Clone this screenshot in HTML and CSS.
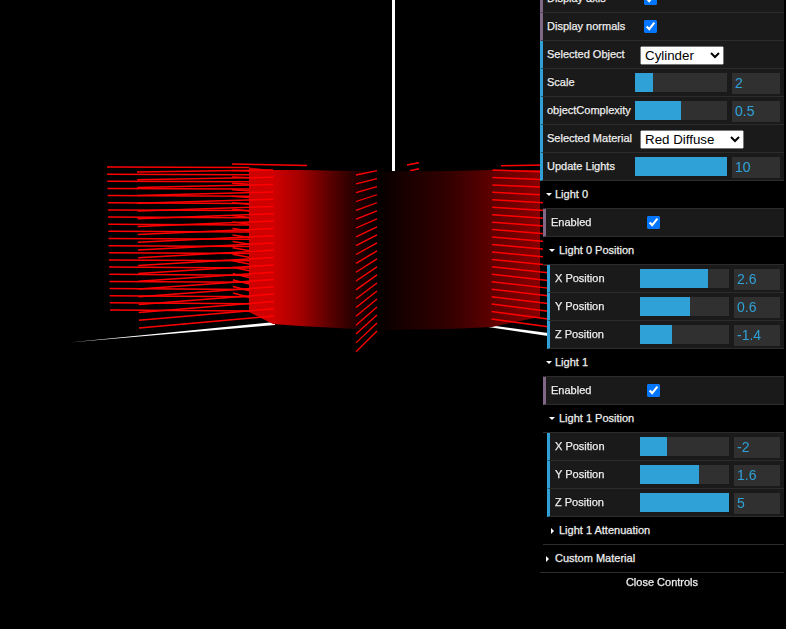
FILE: index.html
```html
<!DOCTYPE html>
<html lang="en">
<head>
<meta charset="utf-8">
<title>Scene controls</title>
<link rel="stylesheet" href="styles.css">
</head>
<body>
<canvas id="scene" class="scene" width="786" height="629"></canvas>
<div class="panel">
  <div class="row check"><span class="label">Display axis</span><input class="box" type="checkbox" checked></div>
  <div class="row check"><span class="label">Display normals</span><input class="box" type="checkbox" checked></div>
  <div class="row"><span class="label">Selected Object</span><select class="pick pick-object"><option>Cylinder</option></select></div>
  <div class="row"><span class="label">Scale</span><div class="slider"><div class="fill" style="width:20%"></div></div><input class="num" type="text" value="2"></div>
  <div class="row"><span class="label">objectComplexity</span><div class="slider"><div class="fill" style="width:50%"></div></div><input class="num" type="text" value="0.5"></div>
  <div class="row"><span class="label">Selected Material</span><select class="pick pick-material"><option>Red Diffuse</option></select></div>
  <div class="row"><span class="label">Update Lights</span><div class="slider"><div class="fill" style="width:100%"></div></div><input class="num" type="text" value="10"></div>

  <div class="folder">
    <div class="title open">Light 0</div>
    <div class="row check"><span class="label">Enabled</span><input class="box" type="checkbox" checked></div>
    <div class="title open sub">Light 0 Position</div>
    <div class="group">
      <div class="row"><span class="label">X Position</span><div class="slider"><div class="fill" style="width:76.4%"></div></div><input class="num" type="text" value="2.6"></div>
      <div class="row"><span class="label">Y Position</span><div class="slider"><div class="fill" style="width:56%"></div></div><input class="num" type="text" value="0.6"></div>
      <div class="row"><span class="label">Z Position</span><div class="slider"><div class="fill" style="width:36%"></div></div><input class="num" type="text" value="-1.4"></div>
    </div>
    <div class="title open">Light 1</div>
    <div class="row check"><span class="label">Enabled</span><input class="box" type="checkbox" checked></div>
    <div class="title open sub">Light 1 Position</div>
    <div class="group">
      <div class="row"><span class="label">X Position</span><div class="slider"><div class="fill" style="width:30%"></div></div><input class="num" type="text" value="-2"></div>
      <div class="row"><span class="label">Y Position</span><div class="slider"><div class="fill" style="width:66.3%"></div></div><input class="num" type="text" value="1.6"></div>
      <div class="row"><span class="label">Z Position</span><div class="slider"><div class="fill" style="width:100%"></div></div><input class="num" type="text" value="5"></div>
    </div>
    <div class="title closed sub">Light 1 Attenuation</div>
  </div>
  <div class="title closed top">Custom Material</div>
  <div class="close">Close Controls</div>
</div>
<script src="script.js"></script>
</body>
</html>
```
FILE: styles.css
```css
html, body {
  margin: 0;
  height: 100%;
  overflow: hidden;
  background: #000;
}

.scene {
  display: block;
}

.panel {
  position: absolute;
  top: -15px;
  right: 2px;
  width: 244px;
  font: 11px/27px "Liberation Sans", Arial, sans-serif;
  color: #eee;
  text-shadow: 0 -1px 0 #111;
  -webkit-text-stroke: 0.25px #eee;
}

.row {
  display: flex;
  align-items: flex-start;
  height: 27px;
  border-bottom: 1px solid #2c2c2c;
  border-left: 3px solid #2fa1d6;
  background: #1a1a1a;
}

.row.check {
  border-left-color: #806787;
}

.label {
  flex: none;
  box-sizing: border-box;
  width: 92px;
  padding-left: 4px;
  white-space: nowrap;
}

.box {
  width: 13px;
  height: 13px;
  margin: 7px 0 0 9px;
}

.pick {
  box-sizing: border-box;
  height: 19px;
  margin: 5px 0 0 5px;
  font: 13.33px "Liberation Sans", Arial, sans-serif;
  -webkit-text-stroke: 0;
}

.pick-object {
  width: 84px;
}

.pick-material {
  width: 104px;
}

.slider {
  flex: none;
  width: 92px;
  height: 19px;
  margin-top: 4px;
  background: #303030;
}

.fill {
  height: 100%;
  background: #2fa1d6;
}

.num {
  flex: none;
  box-sizing: border-box;
  width: 48px;
  height: 21px;
  margin: 4px 0 0 5px;
  padding: 0 3px 2px;
  border: 0;
  outline: 0;
  background: #303030;
  color: #2fa1d6;
  font: 14px "Liberation Sans", Arial, sans-serif;
  -webkit-text-stroke: 0;
}

.folder {
  margin-left: 3px;
}

.folder > .row .label {
  padding-left: 5px;
}

.title {
  position: relative;
  height: 27px;
  padding-left: 12px;
  border-bottom: 1px solid #2c2c2c;
  background: #000;
  white-space: nowrap;
}

.title::before {
  content: "";
  position: absolute;
  top: 12px;
  left: 3px;
  border-style: solid;
  border-color: transparent;
}

.title.open::before {
  border-width: 3px 3px 0;
  border-top-color: #fff;
}

.title.closed::before {
  top: 11px;
  border-width: 3px 0 3px 3px;
  border-left-color: #fff;
}

.title.sub {
  padding-left: 16px;
}

.title.sub.open::before {
  left: 6px;
}

.title.sub.closed::before {
  left: 8px;
}

.title.top {
  padding-left: 15px;
}

.title.top::before {
  left: 6px;
}

.group {
  margin-left: 4px;
}

.group .label {
  width: 90px;
  padding-left: 5px;
}

.group .slider {
  width: 89px;
}

.group .num {
  width: 46px;
}

.close {
  height: 20px;
  line-height: 19px;
  text-align: center;
  background: #000;
}
```
FILE: script.js
```js
(function () {
  var ctx = document.getElementById('scene').getContext('2d');

  function line(x1, y1, x2, y2, width, color) {
    ctx.beginPath();
    ctx.moveTo(x1, y1);
    ctx.lineTo(x2, y2);
    ctx.lineWidth = width;
    ctx.strokeStyle = color;
    ctx.stroke();
  }

  // A ring of normals: n lines interpolated between a top and a bottom line.
  function ring(top, bottom, width) {
    var n = 20;
    for (var i = 0; i <= n; i++) {
      var t = i / n;
      line(
        top[0] + (bottom[0] - top[0]) * t,
        top[1] + (bottom[1] - top[1]) * t,
        top[2] + (bottom[2] - top[2]) * t,
        top[3] + (bottom[3] - top[3]) * t,
        width,
        '#f00'
      );
    }
  }

  // Axes
  ctx.fillStyle = '#fff';
  ctx.fillRect(392, 0, 3, 171);
  ctx.beginPath();
  ctx.moveTo(69, 342.5);
  ctx.lineTo(275, 322);
  ctx.lineTo(275, 325);
  ctx.closePath();
  ctx.fill();
  ctx.beginPath();
  ctx.moveTo(488, 325);
  ctx.lineTo(548, 333);
  ctx.lineTo(548, 336);
  ctx.lineTo(488, 327);
  ctx.closePath();
  ctx.fill();

  // Normals behind the cylinder
  ring([232, 164, 307, 165.5], [233, 293, 300, 311], 1.5);
  line(407, 165, 419, 162.7, 1.5, '#f00');
  line(410, 170.7, 419, 168.7, 1.5, '#f00');
  line(501, 165.7, 548, 165, 1.5, '#f00');

  // Cylinder body
  var body = ctx.createLinearGradient(249, 0, 540, 0);
  var stops = [
    [249, 205], [273, 208], [300, 165], [330, 90], [356, 35], [378, 4],
    [400, 22], [450, 52], [490, 92], [540, 135]
  ];
  stops.forEach(function (s) {
    body.addColorStop((s[0] - 249) / 291, 'rgb(' + s[1] + ',0,0)');
  });
  ctx.fillStyle = body;
  ctx.beginPath();
  [
    [249, 167.5], [273, 170], [300, 170], [356, 171], [378, 171.5], [450, 171],
    [492, 170], [540, 170], [540, 317], [515, 322], [492, 327], [450, 329],
    [378, 330], [356, 329], [300, 326], [273, 324], [249, 312]
  ].forEach(function (p, i) {
    if (i) ctx.lineTo(p[0], p[1]); else ctx.moveTo(p[0], p[1]);
  });
  ctx.closePath();
  ctx.fill();

  // Normals in front of the cylinder
  ring([107, 167, 249, 167.5], [110, 310, 250, 311], 1.5);
  ring([137, 172, 273, 170], [139, 328, 274, 316], 1.5);
  ring([356, 175, 377, 170.7], [356, 351.7, 377, 331], 1.3);
  for (var i = 0; i <= 20; i++) {
    var t = i / 20;
    var y1 = 170 + 149 * t;
    var y2 = 171.7 + 154 * t;
    var endX = y2 < 202 ? 540 : 548;
    var slope = (y2 - y1) / 47.3;
    line(492.5 - t, y1, endX, y2 + (endX - 540) * slope, 1.5, '#f00');
  }
})();
```
